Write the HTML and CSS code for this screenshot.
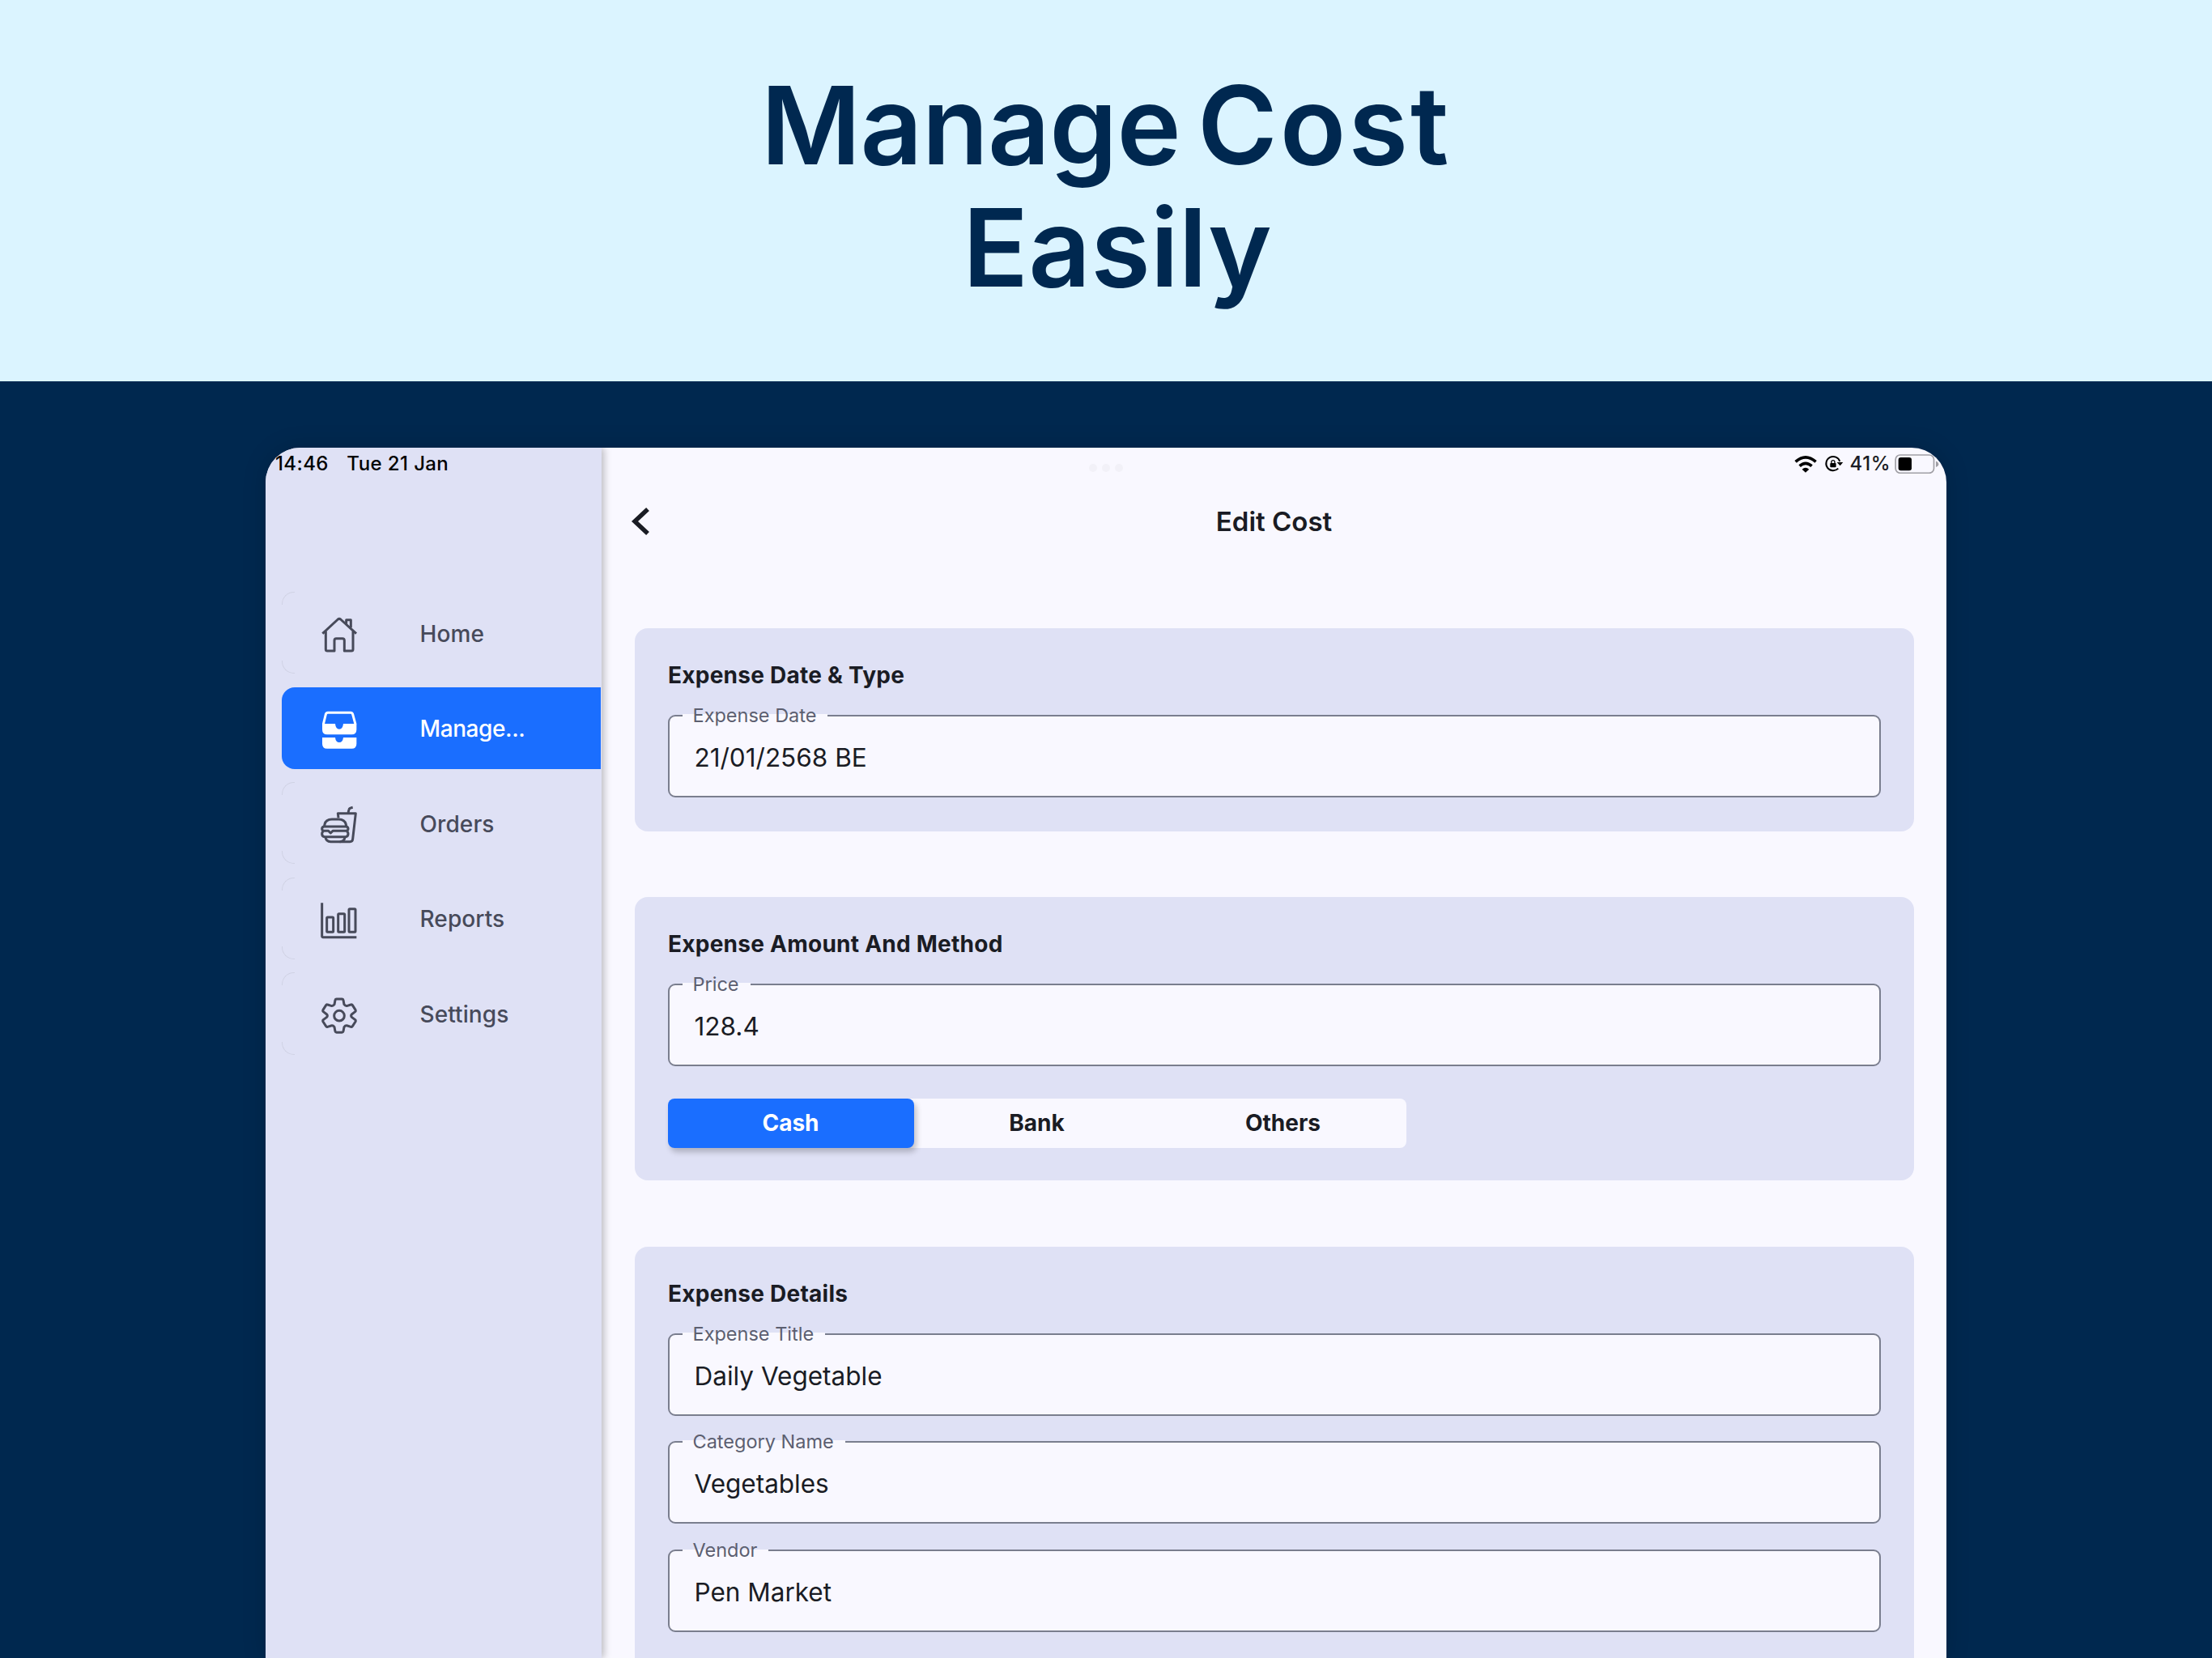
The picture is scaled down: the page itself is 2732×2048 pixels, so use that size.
FILE: index.html
```html
<!DOCTYPE html>
<html lang="en">
<head>
    <meta charset="UTF-8">
    <title>Manage Cost</title>
    <link rel="stylesheet" href="styles.css">
</head>
<body>

    <header class="hero">
        <h1><span class="line1">Manage <span class="wide">Cost</span></span><span class="line2">Easily</span></h1>
    </header>

    <div class="device">
        <nav class="sidebar">
            <div class="status-left">
                <span class="time">14:46</span>
                <span class="date">Tue 21 Jan</span>
            </div>
            <ul class="menu">
                <li>
                    <svg class="icon" viewBox="0 0 144 144">
                        <path d="M10 68 L67 15 Q72 11 77 15 L135 68"/>
                        <path d="M22 60 V126 Q22 132 28 132 H54 V93 Q54 86 61 86 H84 Q91 86 91 93 V132 H117 Q123 132 123 126 V60"/>
                        <path d="M98 32 V17 H115 V46"/>
                    </svg>
                    <span>Home</span>
                </li>
                <li class="active">
                    <svg class="icon" viewBox="0 0 144 144">
                        <path d="M13 50 L22 13 Q24 7 30 7 H114 Q120 7 122 13 L132 50"/>
                        <path class="fill" d="M9 48 H57 Q59 68 72 68 T87 48 H136 V70 Q136 88 118 88 H27 Q9 88 9 70 Z"/>
                        <path class="fill" d="M9 99 H57 Q59 117 72 117 T87 99 H136 V122 Q136 140 118 140 H27 Q9 140 9 122 Z"/>
                    </svg>
                    <span>Manage...</span>
                </li>
                <li>
                    <svg class="icon" viewBox="0 0 144 144">
                        <path d="M105 27 L108 15 Q109 10 122 7"/>
                        <path d="M69 46 L67 29 H133 L122 124 Q121 134 112 134 H74"/>
                        <path d="M17 77 Q18 51 45 51 H70 Q96 51 98 77"/>
                        <path d="M15 78 H98 Q105 80 105 86 T98 94 H48 L40 102 L32 94 H15 Q8 92 8 86 T15 78 Z"/>
                        <path d="M14 95 Q8 98 8 105 Q8 116 18 116 H95 Q105 116 105 105 Q105 98 99 95"/>
                        <path d="M21 117 Q23 134 40 134 H75 Q91 134 93 117"/>
                    </svg>
                    <span>Orders</span>
                </li>
                <li>
                    <svg class="icon" viewBox="0 0 144 144">
                        <path d="M8 7 V130 Q8 134 12 134 H136"/>
                        <rect x="26" y="60" width="24" height="55" rx="3"/>
                        <rect x="68" y="47" width="24" height="68" rx="3"/>
                        <rect x="108" y="29" width="24" height="86" rx="3"/>
                    </svg>
                    <span>Reports</span>
                </li>
                <li>
                    <svg class="icon" viewBox="0 0 144 144">
                        <path d="M54 29 L57 13 Q58 9 62 9 H82 Q86 9 87 13 L90 29 Q95 36 102 34 L115 30 Q119 28 121 32 L132 49 Q134 53 131 56 L118 66 Q114 71 118 76 L131 86 Q134 89 132 93 L121 110 Q119 114 115 112 L102 108 Q95 106 90 113 L87 129 Q86 133 82 133 H62 Q58 133 57 129 L54 113 Q49 106 42 108 L29 112 Q25 114 23 110 L12 93 Q10 89 13 86 L26 76 Q30 71 26 66 L13 56 Q10 53 12 49 L23 32 Q25 28 29 30 L42 34 Q49 36 54 29 Z"/>
                        <circle cx="72" cy="71" r="19"/>
                    </svg>
                    <span>Settings</span>
                </li>
            </ul>
        </nav>

        <main class="content">
            <div class="status-right">
                <div class="dots"><i></i><i></i><i></i></div>
                <svg class="wifi" viewBox="192 66 90 66">
                    <path d="M200 91 Q237 58 275 91"/>
                    <path d="M215 107 Q237 87 260 107"/>
                    <path class="dot" d="M224 119 Q237 108 250 119 L237 131 Z"/>
                </svg>
                <svg class="lock" viewBox="306 66 72 66">
                    <path d="M364 90 A26 26 0 1 0 358 116"/>
                    <path class="dot" d="M353 93 H376 L365 106 Z"/>
                    <rect class="dot" x="328" y="96" width="22" height="16" rx="3"/>
                    <path class="shackle" d="M333 97 V92 Q333 86 339 86 T345 92 V97"/>
                </svg>
                <span class="percent">41%</span>
                <svg class="battery" viewBox="570 63 165 72">
                    <rect class="case" x="573.5" y="66" width="142" height="67" rx="17"/>
                    <path class="tip" d="M723 89 Q733 92 733 100 T723 111 Z"/>
                    <rect x="584" y="75" width="49" height="49" rx="9"/>
                </svg>
            </div>

            <div class="topbar">
                <svg class="back" viewBox="0 0 24 38"><path d="M21 4 L5 19 L21 34"/></svg>
                <h2>Edit Cost</h2>
            </div>

            <section class="card">
                <h3>Expense Date &amp; Type</h3>
                <div class="field">
                    <label>Expense Date</label>
                    <p>21/01/2568 BE</p>
                </div>
            </section>

            <section class="card amount">
                <h3>Expense Amount And Method</h3>
                <div class="field">
                    <label>Price</label>
                    <p>128.4</p>
                </div>
                <div class="segments">
                    <button class="selected">Cash</button>
                    <button>Bank</button>
                    <button>Others</button>
                </div>
            </section>

            <section class="card details">
                <h3>Expense Details</h3>
                <div class="field">
                    <label>Expense Title</label>
                    <p>Daily Vegetable</p>
                </div>
                <div class="field">
                    <label>Category Name</label>
                    <p>Vegetables</p>
                </div>
                <div class="field">
                    <label>Vendor</label>
                    <p>Pen Market</p>
                </div>
            </section>
        </main>
    </div>

</body>
</html>
```
FILE: styles.css
```css
* {
    box-sizing: border-box;
}
body {
    margin: 0;
    height: 2048px;
    overflow: hidden;
    background: #00284f;
    font-family: Inter, "Liberation Sans", sans-serif;
    color: #1a1c24;
}
h1, h2, h3, p, ul {
    margin: 0;
    padding: 0;
}
.hero {
    height: 471px;
    padding-top: 79px;
    background: #dbf4ff;
}
.hero h1 {
    display: flex;
    flex-direction: column;
    align-items: center;
    font-size: 134px;
    font-weight: 600;
    line-height: 151px;
    color: #002850;
}
.line1 {
    letter-spacing: -0.7px;
    word-spacing: -12px;
}
.wide {
    letter-spacing: 3px;
}
.line2 {
    padding-left: 28px;
}
.device {
    display: flex;
    width: 2076px;
    height: 1495px;
    margin: 82px 0 0 328px;
    border-radius: 43px 43px 0 0;
    overflow: hidden;
    background: #f9f8ff;
    box-shadow: 0 0 30px rgba(0, 0, 0, 0.15);
}

/* sidebar */
.sidebar {
    width: 415px;
    background: #dfe1f5;
    box-shadow: 3px 0 9px rgba(0, 0, 0, 0.25);
    z-index: 1;
}
.status-left {
    display: flex;
    gap: 22.5px;
    height: 178px;
    padding: 5px 0 0 12px;
    font-size: 24px;
    font-weight: 500;
    line-height: 29px;
    letter-spacing: 0.4px;
    color: #000;
}
.menu {
    display: flex;
    flex-direction: column;
    gap: 16.3px;
    padding: 0 1px 0 20px;
    list-style: none;
}
.menu li {
    position: relative;
    display: flex;
    align-items: center;
    gap: 75.5px;
    height: 101.3px;
    padding-left: 47px;
    border-radius: 16px 0 0 16px;
    font-size: 28px;
    font-weight: 500;
    color: #474a5a;
}
/* faint rounded corners on the left of each item */
.menu li::before, .menu li::after {
    content: "";
    position: absolute;
    left: 0;
    width: 15px;
    height: 15px;
    border-left: 1px solid #d0d2e4;
}
.menu li::before {
    top: 0;
    border-top: 1px solid #d0d2e4;
    border-top-left-radius: 15px;
}
.menu li::after {
    bottom: 0;
    border-bottom: 1px solid #d0d2e4;
    border-bottom-left-radius: 15px;
}
.menu .active {
    background: #1a6eff;
    color: #fff;
}
.menu .active::before, .menu .active::after {
    display: none;
}
.menu span {
    margin-top: 2px;
    letter-spacing: 0.1px;
}
.menu .active span {
    letter-spacing: -0.4px;
}
.icon {
    width: 48px;
    height: 48px;
    margin-top: 5px;
    fill: none;
    stroke: currentColor;
    stroke-width: 9;
    stroke-linejoin: round;
}
.icon .fill {
    fill: currentColor;
    stroke: none;
}

/* content */
.content {
    flex: 1;
    padding: 0 40px 0 41px;
}
.status-right {
    display: flex;
    align-items: flex-start;
    height: 50px;
    margin-right: -31px;
    padding-top: 8px;
    font-size: 24px;
    font-weight: 500;
    line-height: 24px;
}
.dots {
    display: flex;
    gap: 6px;
    margin: 12px auto 0 561px;
}
.dots i {
    width: 10px;
    height: 10px;
    border-radius: 50%;
    background: #f2f1f8;
}
.wifi, .lock {
    fill: none;
    stroke: #000;
    height: 22px;
    margin-top: 1px;
}
.wifi {
    width: 30px;
    margin-right: 8px;
    stroke-width: 11;
}
.lock {
    width: 24px;
    margin-right: 8px;
    stroke-width: 6;
}
.dot {
    fill: #000;
    stroke: none;
}
.shackle {
    stroke-width: 4;
}
.percent {
    letter-spacing: 0.5px;
}
.battery {
    width: 55px;
    height: 24px;
    margin-left: 5px;
}
.case {
    fill: none;
    stroke: #a09fa5;
    stroke-width: 5;
}
.tip {
    fill: #a09fa5;
}
.topbar {
    display: flex;
    align-items: center;
    height: 82px;
    margin-bottom: 91px;
}
.back {
    width: 24px;
    height: 38px;
    margin-left: -5px;
    fill: none;
    stroke: #1a1c24;
    stroke-width: 5.5;
}
.topbar h2 {
    flex: 1;
    margin-right: 20px;
    text-align: center;
    font-size: 33px;
    font-weight: 600;
}
.card {
    height: 250.5px;
    margin-bottom: 81.3px;
    padding: 41px;
    border-radius: 16px;
    background: #dfe1f5;
}
.card.amount {
    height: 350.5px;
}
.card.details {
    height: 508px;
    margin-bottom: 0;
    border-radius: 16px 16px 0 0;
}
.card h3 {
    height: 66px;
    font-size: 28px;
    font-weight: 700;
    line-height: 34px;
    letter-spacing: 0.25px;
}
.field {
    position: relative;
    height: 102px;
    padding: 33px 0 0 30.5px;
    border: 2px solid #7a7e8e;
    border-radius: 9px;
    background: #f9f8ff;
}
.field + .field {
    margin-top: 31.7px;
}
.field label {
    position: absolute;
    left: 16px;
    top: -16px;
    padding: 0 14px 0 12.5px;
    font-size: 23.5px;
    line-height: 30px;
    color: #5c5f70;
    background: linear-gradient(transparent 13.5px, #f9f8ff 13.5px);
}
.field p {
    font-size: 31.5px;
    line-height: 36px;
}
.segments {
    display: flex;
    width: 912px;
    height: 61px;
    margin-top: 40px;
    border-radius: 8px;
    background: #f9f8ff;
}
.segments button {
    flex: 1;
    padding: 0 1px 0 0;
    border: none;
    border-radius: 8px;
    background: none;
    font-family: inherit;
    font-size: 28px;
    font-weight: 700;
    color: #1a1c24;
}
.segments .selected {
    background: #1a6eff;
    color: #fff;
    box-shadow: 3px 5px 7px rgba(0, 0, 0, 0.22);
}
```
